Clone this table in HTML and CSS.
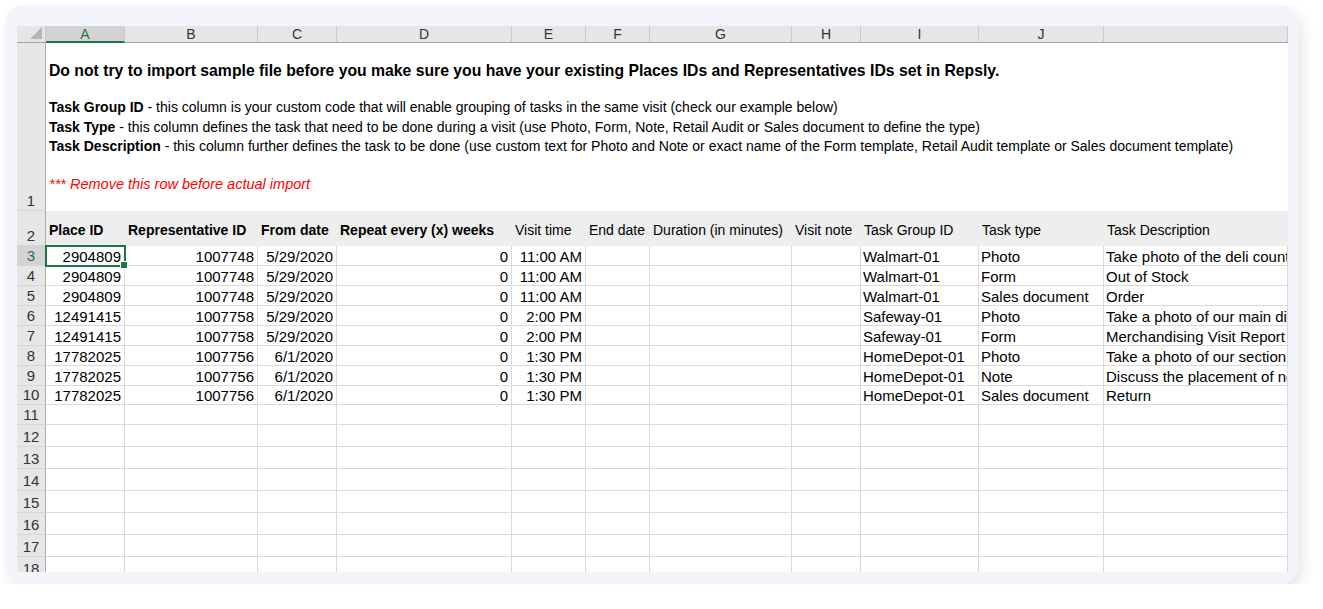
FILE: index.html
```html
<!DOCTYPE html>
<html lang="en">
<head>
<meta charset="utf-8">
<title>Import sample</title>
<link rel="stylesheet" href="styles.css">
</head>
<body>
<div class="card">
  <div class="sheet">
    <!-- column headers -->
    <div class="corner"><svg width="12" height="12" viewBox="0 0 12 12"><polygon points="12,0 12,12 0,12" fill="#b5b5b5"/></svg></div>
    <div class="ch sel">A</div>
    <div class="ch">B</div>
    <div class="ch">C</div>
    <div class="ch">D</div>
    <div class="ch">E</div>
    <div class="ch">F</div>
    <div class="ch">G</div>
    <div class="ch">H</div>
    <div class="ch">I</div>
    <div class="ch">J</div>
    <div class="ch"></div>

    <!-- row 1 -->
    <div class="rh">1</div>
    <div class="intro">
      <p class="lead">Do not try to import sample file before you make sure you have your existing Places IDs and Representatives IDs set in Repsly.</p>
      <p class="line"><b>Task Group ID</b> - this column is your custom code that will enable grouping of tasks in the same visit (check our example below)</p>
      <p class="line"><b>Task Type</b> - this column defines the task that need to be done during a visit (use Photo, Form, Note, Retail Audit or Sales document to define the type)</p>
      <p class="line"><b>Task Description</b> - this column further defines the task to be done (use custom text for Photo and Note or exact name of the Form template, Retail Audit template or Sales document template)</p>
      <p class="warn">*** Remove this row before actual import</p>
    </div>

    <!-- row 2 -->
    <div class="rh">2</div>
    <div class="hd b">Place ID</div>
    <div class="hd b">Representative ID</div>
    <div class="hd b">From date</div>
    <div class="hd b">Repeat every (x) weeks</div>
    <div class="hd">Visit time</div>
    <div class="hd">End date</div>
    <div class="hd">Duration (in minutes)</div>
    <div class="hd">Visit note</div>
    <div class="hd">Task Group ID</div>
    <div class="hd">Task type</div>
    <div class="hd">Task Description</div>

    <!-- row 3 -->
    <div class="rh sel">3</div>
    <div class="c n sel">2904809</div>
    <div class="c n">1007748</div>
    <div class="c n">5/29/2020</div>
    <div class="c n">0</div>
    <div class="c n">11:00 AM</div>
    <div class="c"></div>
    <div class="c"></div>
    <div class="c"></div>
    <div class="c">Walmart-01</div>
    <div class="c">Photo</div>
    <div class="c">Take photo of the deli counter</div>

    <!-- row 4 -->
    <div class="rh">4</div>
    <div class="c n">2904809</div>
    <div class="c n">1007748</div>
    <div class="c n">5/29/2020</div>
    <div class="c n">0</div>
    <div class="c n">11:00 AM</div>
    <div class="c"></div>
    <div class="c"></div>
    <div class="c"></div>
    <div class="c">Walmart-01</div>
    <div class="c">Form</div>
    <div class="c">Out of Stock</div>

    <!-- row 5 -->
    <div class="rh">5</div>
    <div class="c n">2904809</div>
    <div class="c n">1007748</div>
    <div class="c n">5/29/2020</div>
    <div class="c n">0</div>
    <div class="c n">11:00 AM</div>
    <div class="c"></div>
    <div class="c"></div>
    <div class="c"></div>
    <div class="c">Walmart-01</div>
    <div class="c">Sales document</div>
    <div class="c">Order</div>

    <!-- row 6 -->
    <div class="rh">6</div>
    <div class="c n">12491415</div>
    <div class="c n">1007758</div>
    <div class="c n">5/29/2020</div>
    <div class="c n">0</div>
    <div class="c n">2:00 PM</div>
    <div class="c"></div>
    <div class="c"></div>
    <div class="c"></div>
    <div class="c">Safeway-01</div>
    <div class="c">Photo</div>
    <div class="c">Take a photo of our main display</div>

    <!-- row 7 -->
    <div class="rh">7</div>
    <div class="c n">12491415</div>
    <div class="c n">1007758</div>
    <div class="c n">5/29/2020</div>
    <div class="c n">0</div>
    <div class="c n">2:00 PM</div>
    <div class="c"></div>
    <div class="c"></div>
    <div class="c"></div>
    <div class="c">Safeway-01</div>
    <div class="c">Form</div>
    <div class="c">Merchandising Visit Report</div>

    <!-- row 8 -->
    <div class="rh">8</div>
    <div class="c n">17782025</div>
    <div class="c n">1007756</div>
    <div class="c n">6/1/2020</div>
    <div class="c n">0</div>
    <div class="c n">1:30 PM</div>
    <div class="c"></div>
    <div class="c"></div>
    <div class="c"></div>
    <div class="c">HomeDepot-01</div>
    <div class="c">Photo</div>
    <div class="c">Take a photo of our section</div>

    <!-- row 9 -->
    <div class="rh">9</div>
    <div class="c n">17782025</div>
    <div class="c n">1007756</div>
    <div class="c n">6/1/2020</div>
    <div class="c n">0</div>
    <div class="c n">1:30 PM</div>
    <div class="c"></div>
    <div class="c"></div>
    <div class="c"></div>
    <div class="c">HomeDepot-01</div>
    <div class="c">Note</div>
    <div class="c">Discuss the placement of new products</div>

    <!-- row 10 -->
    <div class="rh">10</div>
    <div class="c n">17782025</div>
    <div class="c n">1007756</div>
    <div class="c n">6/1/2020</div>
    <div class="c n">0</div>
    <div class="c n">1:30 PM</div>
    <div class="c"></div>
    <div class="c"></div>
    <div class="c"></div>
    <div class="c">HomeDepot-01</div>
    <div class="c">Sales document</div>
    <div class="c">Return</div>

    <!-- empty rows -->
    <div class="rh">11</div>
    <div class="c"></div><div class="c"></div><div class="c"></div><div class="c"></div><div class="c"></div><div class="c"></div><div class="c"></div><div class="c"></div><div class="c"></div><div class="c"></div><div class="c"></div>
    <div class="rh">12</div>
    <div class="c"></div><div class="c"></div><div class="c"></div><div class="c"></div><div class="c"></div><div class="c"></div><div class="c"></div><div class="c"></div><div class="c"></div><div class="c"></div><div class="c"></div>
    <div class="rh">13</div>
    <div class="c"></div><div class="c"></div><div class="c"></div><div class="c"></div><div class="c"></div><div class="c"></div><div class="c"></div><div class="c"></div><div class="c"></div><div class="c"></div><div class="c"></div>
    <div class="rh">14</div>
    <div class="c"></div><div class="c"></div><div class="c"></div><div class="c"></div><div class="c"></div><div class="c"></div><div class="c"></div><div class="c"></div><div class="c"></div><div class="c"></div><div class="c"></div>
    <div class="rh">15</div>
    <div class="c"></div><div class="c"></div><div class="c"></div><div class="c"></div><div class="c"></div><div class="c"></div><div class="c"></div><div class="c"></div><div class="c"></div><div class="c"></div><div class="c"></div>
    <div class="rh">16</div>
    <div class="c"></div><div class="c"></div><div class="c"></div><div class="c"></div><div class="c"></div><div class="c"></div><div class="c"></div><div class="c"></div><div class="c"></div><div class="c"></div><div class="c"></div>
    <div class="rh">17</div>
    <div class="c"></div><div class="c"></div><div class="c"></div><div class="c"></div><div class="c"></div><div class="c"></div><div class="c"></div><div class="c"></div><div class="c"></div><div class="c"></div><div class="c"></div>
    <div class="rh">18</div>
    <div class="c"></div><div class="c"></div><div class="c"></div><div class="c"></div><div class="c"></div><div class="c"></div><div class="c"></div><div class="c"></div><div class="c"></div><div class="c"></div><div class="c"></div>
  </div>
</div>
</body>
</html>
```

FILE: styles.css
```css
* { box-sizing: border-box; }

html, body {
  margin: 0;
  padding: 0;
  background: #ffffff;
}

.card {
  margin: 5px 0 0 5px;
  width: 1293px;
  height: 579px;
  padding: 21px 10px 12px 12px;
  background: #f4f5fa;
  border-radius: 18px;
  box-shadow: 5px 7px 14px rgba(40, 50, 90, 0.11);
}

.sheet {
  height: 546px;
  overflow: hidden;
  background: #ffffff;
  display: grid;
  grid-template-columns: 29px 79px 133px 79px 175px 74px 64px 142px 69px 118px 125px 184px;
  grid-template-rows: 17px 168px 35px repeat(7, 20px) 19px 20px repeat(8, 22px);
  font-family: "Liberation Sans", Arial, sans-serif;
  color: #000;
}

/* column headers */
.corner {
  background: #e6e6e6;
  border-right: 1px solid #c9c9c9;
  border-bottom: 1px solid #a3a3a3;
  display: flex;
  align-items: flex-end;
  justify-content: flex-end;
  padding: 0 3px 3px 0;
}

.ch {
  background: #e6e6e6;
  border-right: 1px solid #c9c9c9;
  border-bottom: 1px solid #a3a3a3;
  color: #333;
  font-size: 14px;
  line-height: 16px;
  text-align: center;
}

.ch.sel {
  background: #d3d3d3;
  color: #217346;
  border-bottom: 2px solid #217346;
}

/* row headers */
.rh {
  background: #e6e6e6;
  border-right: 1px solid #acacac;
  border-bottom: 1px solid #d6d6d6;
  color: #333;
  font-size: 15px;
  line-height: 17px;
  display: flex;
  align-items: flex-end;
  justify-content: center;
  padding-bottom: 1px;
}

.rh.sel {
  background: #d3d3d3;
  color: #217346;
}

/* row 1 */
.intro {
  grid-column: 2 / -1;
  background: #ffffff;
  padding: 18px 0 0 3px;
  white-space: nowrap;
}

.intro p {
  margin: 0;
}

.lead {
  font-size: 15.75px;
  font-weight: bold;
  line-height: 20px;
  margin-bottom: 17px !important;
}

.line {
  font-size: 14px;
  line-height: 19.5px;
}

.warn {
  font-size: 14.5px;
  line-height: 20px;
  font-style: italic;
  color: #ff0000;
  margin-top: 17.5px !important;
}

/* row 2 */
.hd {
  background: #eeeeee;
  font-size: 14px;
  line-height: 18px;
  white-space: nowrap;
  overflow: hidden;
  padding: 3px 3px 0;
  display: flex;
  align-items: center;
}

.hd.b {
  font-weight: bold;
}

/* data cells */
.c {
  border-right: 1px solid #dadada;
  border-bottom: 1px solid #dadada;
  font-size: 15px;
  line-height: 16px;
  white-space: nowrap;
  overflow: hidden;
  padding: 0 3px 0 2px;
  display: flex;
  align-items: flex-end;
}

.c.n {
  justify-content: flex-end;
}

.c.sel {
  position: relative;
  overflow: visible;
  outline: 2px solid #217346;
  outline-offset: -1px;
}

.c.sel::after {
  content: "";
  position: absolute;
  right: -4px;
  bottom: -4px;
  width: 6px;
  height: 6px;
  background: #217346;
  border: 1px solid #ffffff;
}
```
